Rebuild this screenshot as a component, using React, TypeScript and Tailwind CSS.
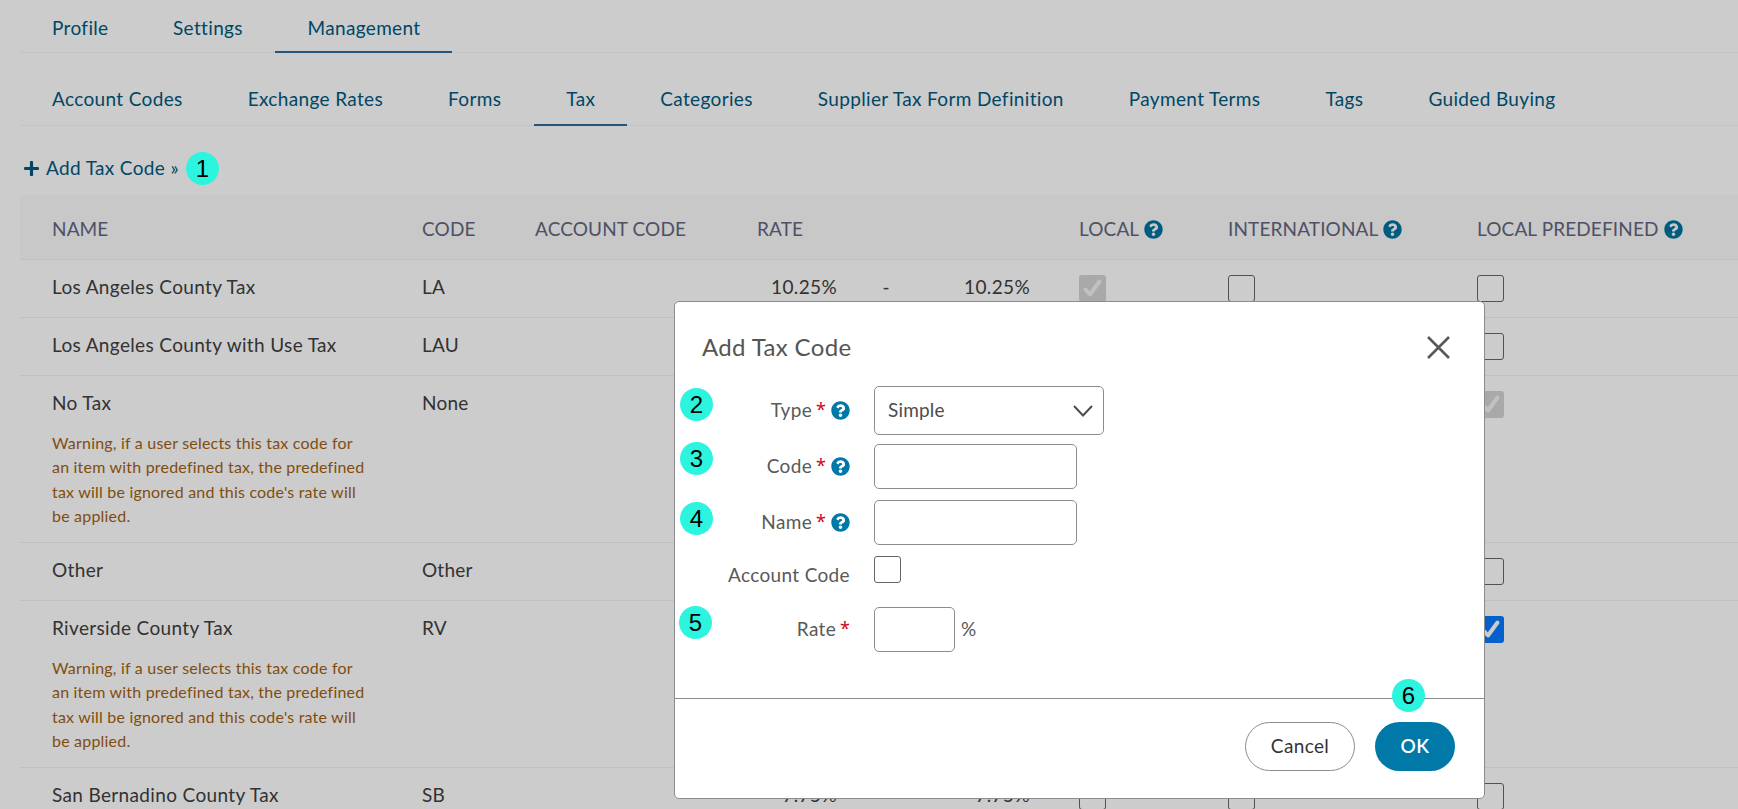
import { FaPlus, FaQuestionCircle } from "react-icons/fa";

const FONT = "font-['Lato','Noto_Sans',sans-serif]";

const mainTabs = [
  { label: "Profile" },
  { label: "Settings" },
  { label: "Management", active: true },
];

const subTabs = [
  { label: "Account Codes" },
  { label: "Exchange Rates" },
  { label: "Forms" },
  { label: "Tax", active: true },
  { label: "Categories" },
  { label: "Supplier Tax Form Definition" },
  { label: "Payment Terms" },
  { label: "Tags" },
  { label: "Guided Buying" },
];

type Box = "off" | "on" | "disabled";

const taxRows: { name: string; code: string; rate: string; warn?: boolean; boxes: [Box, Box, Box] }[] = [
  { name: "Los Angeles County Tax", code: "LA", rate: "10.25%", boxes: ["disabled", "off", "off"] },
  { name: "Los Angeles County with Use Tax", code: "LAU", rate: "10.25%", boxes: ["off", "off", "off"] },
  { name: "No Tax", code: "None", rate: "0%", warn: true, boxes: ["off", "off", "disabled"] },
  { name: "Other", code: "Other", rate: "0%", boxes: ["off", "off", "off"] },
  { name: "Riverside County Tax", code: "RV", rate: "7.75%", warn: true, boxes: ["off", "off", "on"] },
  { name: "San Bernadino County Tax", code: "SB", rate: "7.75%", boxes: ["off", "off", "off"] },
];

const COLS = "grid grid-cols-[370px_113px_222px_322px_149px_249px_1fr]";

function CheckMark() {
  return (
    <svg width="21" height="21" viewBox="0 0 21 21" fill="none" stroke="currentColor" strokeWidth="4" strokeLinecap="round" strokeLinejoin="round">
      <path d="M3.5 11.5 L8 16.5 L17.5 3.5" />
    </svg>
  );
}

function Checkbox({ state }: { state: Box }) {
  if (state === "on") {
    return (
      <span className="flex h-[27px] w-[27px] items-center justify-center rounded-[3px] bg-[#0778ff] text-white">
        <CheckMark />
      </span>
    );
  }
  if (state === "disabled") {
    return (
      <span className="flex h-[27px] w-[27px] items-center justify-center rounded-[3px] bg-[#d4d4d4] text-[#f2f2f2]">
        <CheckMark />
      </span>
    );
  }
  return <span className="block h-[27px] w-[27px] rounded-[3px] border border-[#666] bg-white" />;
}

function Badge({ n, className }: { n: number; className: string }) {
  return (
    <span
      className={`absolute flex h-[33px] w-[33px] items-center justify-center rounded-full bg-[#2df4de] font-['Liberation_Sans',sans-serif] text-[24px] leading-none text-black ${className}`}
    >
      {n}
    </span>
  );
}

function Help({ size = 19, color = "text-[#0079a8]" }: { size?: number; color?: string }) {
  return (
    <span className={color}>
      <FaQuestionCircle size={size} />
    </span>
  );
}

function Star() {
  return (
    <span className="-ml-[1px] -translate-y-[2px] font-['Noto_Sans',sans-serif] text-[18px] leading-none tracking-normal text-[#d6001c]">
      *
    </span>
  );
}

function FieldLabel({ text, required, help, width = "" }: { text: string; required?: boolean; help?: boolean; width?: string }) {
  return (
    <div className={`flex w-[175px] shrink-0 items-center justify-end gap-[5px] text-[#595959] ${width}`}>
      <span>{text}</span>
      {required && <Star />}
      {help && <Help />}
    </div>
  );
}

export default function App() {
  return (
    <div className={`relative h-[809px] w-full overflow-hidden bg-white text-[19px] tracking-[0.35px] ${FONT}`}>
      {/* Top tabs */}
      <div className="ml-[20px] flex h-[53px] gap-[0.5px] border-b border-[#f5f5f5]">
        {mainTabs.map((t) => (
          <div
            key={t.label}
            className={`flex h-[53px] items-center border-b-2 px-[32px] pt-[5px] text-[#00597f] ${t.active ? "border-[#2c6b9e]" : "border-transparent"}`}
          >
            {t.label}
          </div>
        ))}
      </div>

      {/* Sub tabs */}
      <div className="ml-[20px] mt-[20px] flex h-[53px] gap-px border-b border-[#f5f5f5]">
        {subTabs.map((t) => (
          <div
            key={t.label}
            className={`flex h-[53px] items-center border-b-2 px-[32px] pt-[1px] text-[#00597f] ${t.active ? "border-[#2c6b9e]" : "border-transparent"}`}
          >
            {t.label}
          </div>
        ))}
      </div>

      {/* Add link */}
      <div className="ml-[23px] flex h-[69px] items-center gap-[6px] pt-[15px] text-[#00597f]">
        <FaPlus size={17} />
        <span>Add Tax Code »</span>
      </div>

      {/* Table */}
      <div className="ml-[20px]">
        <div className={`${COLS} h-[65px] items-center border-b border-[#f0f0f0] bg-[#fafafa] pl-[32px] pt-[5px] uppercase tracking-[0.12px] text-[#636680]`}>
          <span>Name</span>
          <span>Code</span>
          <span>Account Code</span>
          <span>Rate</span>
          <span className="flex items-center gap-[5px]">
            Local <Help color="text-[#00749f]" />
          </span>
          <span className="flex items-center gap-[5px]">
            International <Help color="text-[#00749f]" />
          </span>
          <span className="flex items-center gap-[5px]">
            Local Predefined <Help color="text-[#00749f]" />
          </span>
        </div>
        {taxRows.map((r) => (
          <div key={r.name} className={`${COLS} border-b border-[#f0f0f0] pl-[32px] pt-[15px] ${r.warn ? "h-[167px]" : "h-[58px]"}`}>
            <div>
              <div className="leading-[24px] text-[#404040]">{r.name}</div>
              {r.warn && (
                <p className="mt-[16px] text-[16px] leading-[24.3px] tracking-[0.2px] text-[#a35f12]">
                  Warning, if a user selects this tax code for
                  <br />
                  an item with predefined tax, the predefined
                  <br />
                  tax will be ignored and this code's rate will
                  <br />
                  be applied.
                </p>
              )}
            </div>
            <div className="leading-[24px] tracking-[0.2px] text-[#404040]">{r.code}</div>
            <div />
            <div className="flex leading-[24px] text-[#404040]">
              <span className="w-[80px] text-right">{r.rate}</span>
              <span className="w-[113px] pr-[60px] text-right">-</span>
              <span className="w-[80px] text-right">{r.rate}</span>
            </div>
            {r.boxes.map((b, i) => (
              <div key={i}>
                <Checkbox state={b} />
              </div>
            ))}
          </div>
        ))}
      </div>

      {/* Dim layer */}
      <div className="absolute inset-0 bg-black/20" />

      {/* Modal */}
      <div className="absolute left-[674px] top-[301px] flex h-[498px] w-[811px] flex-col rounded-[5px] border border-[#8c8c8c] bg-white">
        <div className="flex h-[84px] shrink-0 items-start justify-between pl-[27px] pr-[34px] pt-[30px]">
          <span className="text-[24px] leading-[30px] text-[#555]">Add Tax Code</span>
          <svg className="mt-[4px]" width="23" height="23" viewBox="0 0 23 23" fill="none" stroke="#595959" strokeWidth="2.6">
            <path d="M1 1 L22 22 M22 1 L1 22" />
          </svg>
        </div>

        <div className="flex flex-col">
          <div className="flex h-[49px] items-center gap-[24px]">
            <FieldLabel text="Type" required help />
            <div className="flex h-[49px] w-[230px] items-center justify-between rounded-[5px] border border-[#8c8c8c] pl-[13px] pr-[10px] tracking-[0.2px] text-[#4d4d4d]">
              <span>Simple</span>
              <svg width="20" height="12" viewBox="0 0 20 12" fill="none" stroke="#4d4d4d" strokeWidth="2">
                <path d="M1 1 L10 10.5 L19 1" />
              </svg>
            </div>
          </div>
          <div className="mt-[9px] flex h-[45px] items-center gap-[24px]">
            <FieldLabel text="Code" required help />
            <div className="h-[45px] w-[203px] rounded-[5px] border border-[#8c8c8c]" />
          </div>
          <div className="mt-[11px] flex h-[45px] items-center gap-[24px]">
            <FieldLabel text="Name" required help />
            <div className="h-[45px] w-[203px] rounded-[5px] border border-[#8c8c8c]" />
          </div>
          <div className="mt-[11px] flex h-[27px] items-start gap-[24px]">
            <FieldLabel text="Account Code" width="mt-[5px]" />
            <div className="h-[27px] w-[27px] rounded-[3px] border border-[#666]" />
          </div>
          <div className="mt-[24px] flex h-[45px] items-center">
            <div className="flex w-[175px] shrink-0 items-center justify-end gap-[5px] text-[#595959]">
              Rate <Star />
            </div>
            <div className="ml-[24px] h-[45px] w-[81px] rounded-[5px] border border-[#8c8c8c]" />
            <span className="ml-[6px] text-[#595959]">%</span>
          </div>
        </div>

        <div className="mt-auto flex h-[100px] shrink-0 items-start justify-end gap-[20px] border-t border-[#8c8c8c] pr-[29px] pt-[23px]">
          <button className="flex h-[49px] w-[110px] items-center justify-center rounded-full border border-[#8c8c8c] text-[#333]">
            Cancel
          </button>
          <button className="flex h-[49px] w-[80px] items-center justify-center rounded-full bg-[#0079a8] font-semibold text-white">
            OK
          </button>
        </div>
      </div>

      {/* Callouts */}
      <Badge n={1} className="left-[186px] top-[152px]" />
      <Badge n={2} className="left-[680px] top-[388px]" />
      <Badge n={3} className="left-[680px] top-[442px]" />
      <Badge n={4} className="left-[680px] top-[502px]" />
      <Badge n={5} className="left-[679px] top-[606px]" />
      <Badge n={6} className="left-[1392px] top-[679px]" />
    </div>
  );
}
